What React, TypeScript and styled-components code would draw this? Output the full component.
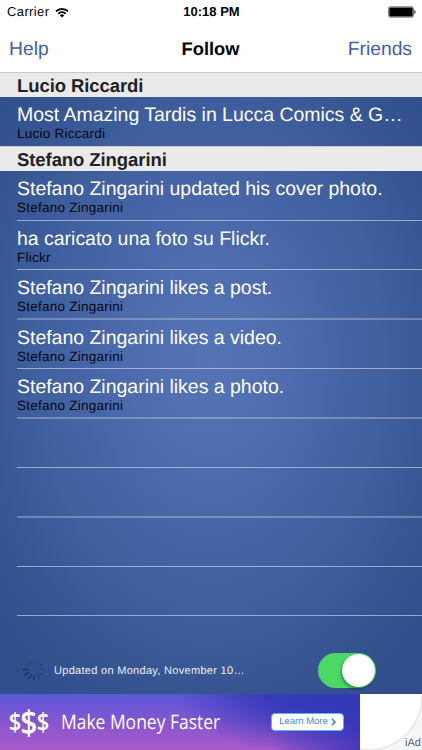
import React from "react";
import styled, { createGlobalStyle } from "styled-components";

const GlobalStyle = createGlobalStyle`
  * { box-sizing: border-box; }
  body { margin: 0; background: #fff; }
`;

const Screen = styled.div`
  width: 422px;
  height: 750px;
  display: flex;
  flex-direction: column;
  overflow: hidden;
  font-family: "Liberation Sans", Arial, sans-serif;
  color: #000;
  text-rendering: geometricPrecision;
`;

const StatusBar = styled.div`
  height: 24px;
  flex: none;
  display: grid;
  grid-template-columns: 1fr auto 1fr;
  align-items: center;
  padding: 0 6px 0 7px;
  font-size: 13px;
  line-height: 24px;
`;

const Carrier = styled.div`
  display: flex;
  align-items: center;
  gap: 6px;
  letter-spacing: 0.38px;
`;

const Clock = styled.div`
  font-weight: 700;
`;

const BatterySlot = styled.div`
  display: flex;
  justify-content: flex-end;
`;

const NavBar = styled.div`
  height: 48px;
  flex: none;
  display: grid;
  grid-template-columns: 1fr auto 1fr;
  align-items: center;
  padding: 0 10px 0 9px;
  line-height: 48px;
`;

const NavLink = styled.div<{ $end?: boolean }>`
  padding-top: 2px;
  color: #4560a5;
  font-size: 19.3px;
  text-align: ${(p) => (p.$end ? "right" : "left")};
`;

const Title = styled.div`
  font-size: 18.3px;
  font-weight: 700;
`;

const Body = styled.div`
  flex: 1;
  display: flex;
  flex-direction: column;
  background: radial-gradient(ellipse 275px 380px at 211px 290px, #5675b7 0%, #4d6bad 30%, #405f9f 64%, #355490 88%, #2f4e8b 110%);
`;

const SectionHeader = styled.div`
  height: 25px;
  padding-left: 17px;
  background: #eaeaeb;
  border-top: 1px solid #c9c9cc;
  color: #222224;
  font-size: 18.5px;
  font-weight: 700;
  line-height: 25px;
  letter-spacing: -0.08px;
`;

const Row = styled.div<{ $height: number; $line?: "sharp" | "soft" }>`
  height: ${(p) => p.$height}px;
  margin-left: 17px;
  padding-top: 7px;
  white-space: nowrap;
  border-bottom: ${(p) =>
    p.$line === "sharp"
      ? "1px solid rgba(205, 210, 225, 0.68)"
      : p.$line === "soft"
        ? "2px solid rgba(205, 210, 225, 0.36)"
        : "none"};
`;

const RowTitle = styled.div`
  height: 22px;
  color: #fff;
  font-size: 19.5px;
  line-height: 23px;
  letter-spacing: -0.02px;
`;

const RowDetail = styled.div`
  height: 16px;
  color: #05070f;
  font-size: 13.5px;
  line-height: 16px;
  letter-spacing: 0.24px;
`;

const Footer = styled.div`
  flex: 1;
  display: flex;
  align-items: center;
  padding: 30px 46px 0 22px;
`;

const FooterText = styled.div`
  flex: 1;
  margin-left: 8px;
  padding-top: 2px;
  color: #eef1f8;
  font-size: 11px;
  letter-spacing: 0.3px;
  white-space: nowrap;
`;

const Toggle = styled.div`
  width: 58px;
  height: 35px;
  padding: 1px;
  border-radius: 18px;
  background: #4cd865;
  display: flex;
  justify-content: flex-end;
`;

const Knob = styled.div`
  width: 33px;
  height: 33px;
  border-radius: 50%;
  background: #fff;
  box-shadow: -1px 2px 3px rgba(0, 0, 0, 0.35);
`;

const AdBar = styled.div`
  height: 56px;
  flex: none;
  display: flex;
`;

const AdBanner = styled.div`
  width: 360px;
  display: flex;
  align-items: center;
  padding-left: 9px;
  color: #fff;
  background:
    radial-gradient(ellipse 150px 62px at 325px 0, #3238b6 0%, rgba(50, 56, 182, 0.85) 40%, rgba(50, 56, 182, 0) 100%),
    linear-gradient(90deg, rgba(60, 50, 185, 0) 76%, rgba(60, 50, 185, 0.85) 100%),
    linear-gradient(180deg, #5b57da 0%, #8656cf 50%, #aa5acb 100%);
`;

const Dollars = styled.div`
  width: 40px;
  display: flex;
  align-items: center;
  justify-content: center;
  font-family: "Open Sans", sans-serif;
  font-weight: 600;
`;

const Dollar = styled.span<{ $size: number }>`
  font-size: ${(p) => p.$size}px;
  line-height: 40px;
  margin: 0 -1.3px;
  transform: scaleX(0.88);
`;

const AdText = styled.div`
  width: 209px;
  padding-left: 12px;
  font-family: "Open Sans", sans-serif;
  font-size: 20px;
  line-height: 56px;
  white-space: nowrap;
`;

const Condensed = styled.span`
  display: inline-block;
  transform: scaleX(0.873);
  transform-origin: left center;
`;

const LearnMore = styled.div`
  width: 73px;
  height: 18px;
  margin: -1px 0 0 13px;
  border: 1px solid #58b5f2;
  border-radius: 4px;
  background: #fff;
  color: #3c8cc8;
  display: flex;
  align-items: center;
  justify-content: center;
  gap: 3px;
  font-size: 9.5px;
  white-space: nowrap;
`;

const AdCorner = styled.div`
  flex: 1;
  display: flex;
  align-items: flex-end;
  justify-content: flex-end;
  padding: 0 1px 0 0;
  color: #5e5e60;
  font-size: 11px;
  line-height: 13px;
  background: radial-gradient(circle at 8px 2px, #fff 0 53px, #dedee0 54px, #f6f6f7 55px);
`;

const WifiIcon = () => (
  <svg width="14" height="11" viewBox="0 0 14 11">
    <path d="M.3 3.7a9.6 9.6 0 0 1 13.4 0l-1.3 1.4a7.7 7.7 0 0 0-10.8 0z" />
    <path d="M2.7 6.1a6.2 6.2 0 0 1 8.6 0L10 7.4a4.3 4.3 0 0 0-6 0z" />
    <path d="M4.9 8.4a3 3 0 0 1 4.2 0L7 10.6z" />
  </svg>
);

const BatteryIcon = () => (
  <svg width="28" height="12" viewBox="0 0 28 12">
    <rect x=".5" y=".8" width="25" height="10.4" rx="1.8" fill="#fff" stroke="#777" />
    <rect x="1.3" y="1.6" width="23.4" height="8.8" rx="1" />
    <path d="M26.5 4v4c1.3-.4 1.3-3.6 0-4z" />
  </svg>
);

const spokes = [0.3, 0.25, 0.25, 0.3, 0.35, 0.45, 0.6, 0.8, 0.95, 0.85, 0.35, 0.3];

const Spinner = () => (
  <svg width="24" height="24" viewBox="-12 -11.5 24 24">
    {spokes.map((opacity, i) => (
      <line
        key={i}
        y1="-6.2"
        y2="-10.2"
        stroke="#223459"
        strokeWidth="1.8"
        strokeLinecap="round"
        opacity={opacity}
        transform={`rotate(${i * 30})`}
      />
    ))}
  </svg>
);

const Chevron = () => (
  <svg width="5" height="8" viewBox="0 0 5 8" fill="none" stroke="#3579b8" strokeWidth="1.4">
    <path d="M.8.8 4 4 .8 7.2" />
  </svg>
);

type Line = "sharp" | "soft";
type Post = { title: string; detail: string; height: number; line: Line };

const posts: Post[] = [
  { title: "Stefano Zingarini updated his cover photo.", detail: "Stefano Zingarini", height: 50, line: "sharp" },
  { title: "ha caricato una foto su Flickr.", detail: "Flickr", height: 49, line: "sharp" },
  { title: "Stefano Zingarini likes a post.", detail: "Stefano Zingarini", height: 50, line: "soft" },
  { title: "Stefano Zingarini likes a video.", detail: "Stefano Zingarini", height: 49, line: "sharp" },
  { title: "Stefano Zingarini likes a photo.", detail: "Stefano Zingarini", height: 50, line: "soft" },
];

const emptyRows: { height: number; line: Line }[] = [
  { height: 49, line: "sharp" },
  { height: 50, line: "soft" },
  { height: 49, line: "sharp" },
  { height: 49, line: "sharp" },
];

export default function App() {
  return (
    <>
      <GlobalStyle />
      <Screen>
        <StatusBar>
          <Carrier>
            Carrier
            <WifiIcon />
          </Carrier>
          <Clock>10:18 PM</Clock>
          <BatterySlot>
            <BatteryIcon />
          </BatterySlot>
        </StatusBar>
        <NavBar>
          <NavLink>Help</NavLink>
          <Title>Follow</Title>
          <NavLink $end>Friends</NavLink>
        </NavBar>
        <Body>
          <SectionHeader>Lucio Riccardi</SectionHeader>
          <Row $height={49}>
            <RowTitle>Most Amazing Tardis in Lucca Comics &amp; G…</RowTitle>
            <RowDetail>Lucio Riccardi</RowDetail>
          </Row>
          <SectionHeader>Stefano Zingarini</SectionHeader>
          {posts.map((post) => (
            <Row key={post.title} $height={post.height} $line={post.line}>
              <RowTitle>{post.title}</RowTitle>
              <RowDetail>{post.detail}</RowDetail>
            </Row>
          ))}
          {emptyRows.map((row, i) => (
            <Row key={i} $height={row.height} $line={row.line} />
          ))}
          <Footer>
            <Spinner />
            <FooterText>Updated on Monday, November 10…</FooterText>
            <Toggle>
              <Knob />
            </Toggle>
          </Footer>
        </Body>
        <AdBar>
          <AdBanner>
            <Dollars>
              <Dollar $size={25}>$</Dollar>
              <Dollar $size={34}>$</Dollar>
              <Dollar $size={25}>$</Dollar>
            </Dollars>
            <AdText>
              <Condensed>Make Money Faster</Condensed>
            </AdText>
            <LearnMore>
              Learn More
              <Chevron />
            </LearnMore>
          </AdBanner>
          <AdCorner>iAd</AdCorner>
        </AdBar>
      </Screen>
    </>
  );
}
